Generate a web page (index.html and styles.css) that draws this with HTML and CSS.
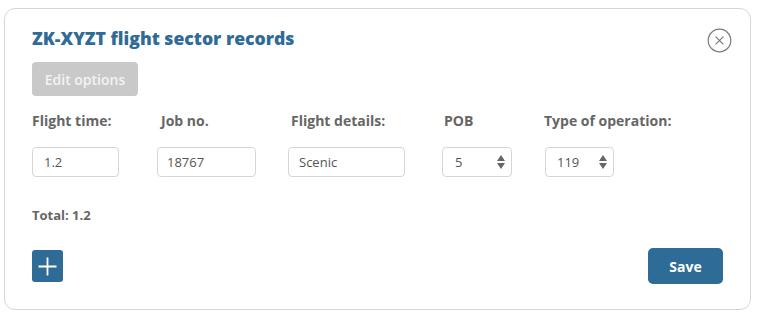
FILE: index.html
```html
<!DOCTYPE html>
<html>
<head>
<meta charset="utf-8">
<link rel="stylesheet" href="styles.css">
</head>
<body>
<div class="card">
  <div class="head">
    <h1 class="title">ZK-XYZT flight sector records</h1>
    <button class="close" aria-label="Close">
      <svg width="25" height="25" viewBox="0 0 25 25"><circle cx="12.5" cy="12.5" r="11.3" fill="none" stroke="#7a7a7a" stroke-width="1.2"/><path d="M8.6 8.6 L16.4 16.4 M16.4 8.6 L8.6 16.4" stroke="#7a7a7a" stroke-width="1.2" fill="none"/></svg>
    </button>
  </div>
  <button class="edit">Edit options</button>
  <div class="grid">
    <div class="lbl l1">Flight time:</div>
    <div class="lbl l2">Job no.</div>
    <div class="lbl l3">Flight details:</div>
    <div class="lbl l4">POB</div>
    <div class="lbl l5">Type of operation:</div>
    <div class="field f1">1.2</div>
    <div class="field f2">18767</div>
    <div class="field f3">Scenic</div>
    <div class="field f4 spin">5<span class="arrows"><i class="up"></i><i class="down"></i></span></div>
    <div class="field f5 spin">119<span class="arrows"><i class="up"></i><i class="down"></i></span></div>
  </div>
  <div class="total">Total: 1.2</div>
  <div class="foot">
    <button class="add" aria-label="Add">
      <svg width="19" height="19" viewBox="0 0 19 19"><path d="M9.5 0.5 V18.5 M0.5 9.5 H18.5" stroke="#fff" stroke-width="1.8"/></svg>
    </button>
    <button class="save">Save</button>
  </div>
</div>
</body>
</html>
```

FILE: styles.css
```css
* { box-sizing: border-box; }
html, body { margin: 0; background: #fff; }
body {
  padding: 8px 10px 9px 4px;
  font-family: "Open Sans", "Liberation Sans", sans-serif;
  color: #666;
}
.card {
  border: 1px solid #d6d6d6;
  border-radius: 11px;
  height: 302px;
  width: 747px;
  padding: 17px 27px 0 27px;
}
.head {
  display: flex;
  justify-content: space-between;
  align-items: flex-start;
  height: 24px;
}
.title {
  margin: 0;
  font-size: 17.6px;
  font-weight: 800;
  font-variant-ligatures: none;
  color: #2f6b97;
  line-height: 24px;
  white-space: nowrap;
}
.close {
  border: 0;
  background: none;
  padding: 0;
  margin: 2px -9px 0 0;
  width: 25px;
  height: 25px;
  cursor: pointer;
}
.close svg { display: block; }
.edit {
  display: block;
  margin-top: 12px;
  width: 106px;
  height: 34px;
  border: 0;
  border-radius: 4px;
  background: #c9c9c9;
  color: #f3f3f3;
  font-family: inherit;
  font-size: 14px;
  font-weight: 600;
  padding: 0;
}
.grid {
  display: grid;
  grid-template-columns: 125px 131px 154px 102px 140px;
  row-gap: 17px;
  margin-top: 16px;
}
.lbl {
  font-size: 14px;
  font-weight: 700;
  color: #666;
  line-height: 18px;
  white-space: nowrap;
}
.l2 { padding-left: 4px; }
.l3 { padding-left: 3px; }
.l4 { padding-left: 2px; }
.field {
  height: 30px;
  border: 1px solid #d6d6d6;
  border-radius: 4px;
  font-size: 13px;
  color: #555;
  line-height: 28px;
  display: flex;
  align-items: center;
  justify-content: space-between;
}
.f1 { width: 87px; padding-left: 11px; }
.f2 { width: 99px; padding-left: 9px; }
.f3 { width: 117px; padding-left: 10px; }
.f4 { width: 70px; padding-left: 12px; padding-right: 6px; }
.f5 { width: 69px; padding-left: 11px; padding-right: 6px; margin-left: 1px; }
.arrows {
  display: flex;
  flex-direction: column;
  gap: 2px;
}
.arrows i {
  display: block;
  width: 0;
  height: 0;
  border-left: 4px solid transparent;
  border-right: 4px solid transparent;
}
.arrows .up { border-bottom: 6px solid #666; }
.arrows .down { border-top: 6px solid #666; }
.total {
  margin-top: 29px;
  font-size: 13px;
  font-weight: 700;
  color: #666;
  line-height: 18px;
}
.foot {
  display: flex;
  justify-content: space-between;
  align-items: center;
  margin-top: 24px;
  width: 691px;
}
.add {
  width: 31px;
  height: 32px;
  border: 0;
  border-radius: 3px;
  background: #2f6b97;
  padding: 0;
  display: flex;
  align-items: center;
  justify-content: center;
}
.save {
  width: 75px;
  height: 36px;
  border: 0;
  border-radius: 5px;
  background: #2f6b97;
  color: #fff;
  font-family: inherit;
  font-size: 14px;
  font-weight: 700;
  padding: 0;
}
```
